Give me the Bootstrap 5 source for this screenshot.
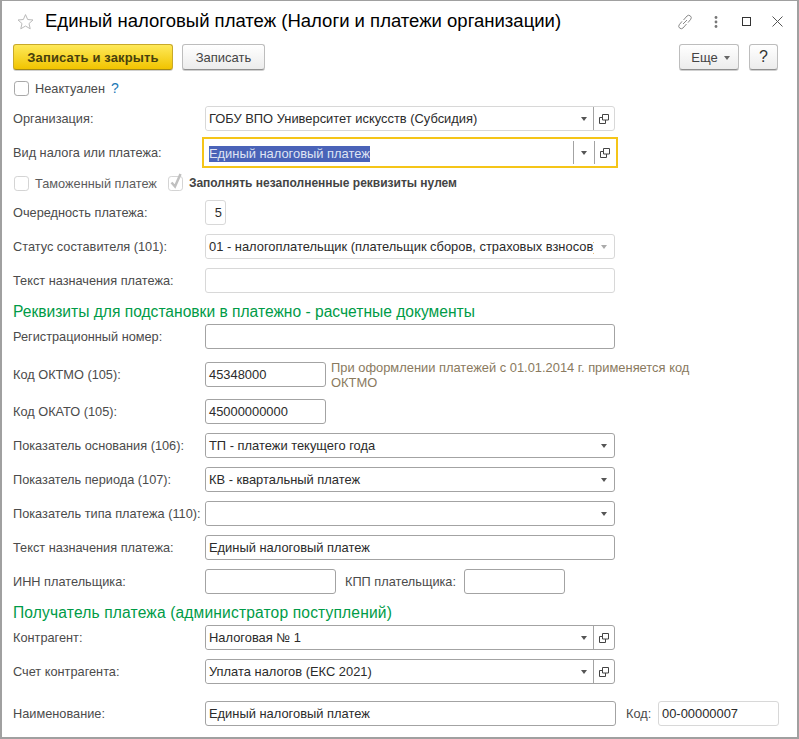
<!DOCTYPE html>
<html lang="ru">
<head>
<meta charset="utf-8">
<title>Единый налоговый платеж</title>
<link href="https://cdn.jsdelivr.net/npm/bootstrap@5.3.0/dist/css/bootstrap.min.css" rel="stylesheet">
<style>
html,body{height:739px;overflow:hidden;background:#fff}
body{font-family:"Liberation Sans",Arial,sans-serif;font-size:12.75px;color:#4b4b4b;line-height:1.2}
.win{width:799px;height:739px;border:1px solid #a0a0a0;border-width:1px 2px 2px 2px;padding:0 0 0 11px;box-sizing:border-box}
.ttl{height:43px;padding-bottom:2px}
.ttl-text{font-size:18.53px;color:#000;margin-left:11px;line-height:1;white-space:nowrap}
.star{margin-left:4px;display:block}
.tools{margin-left:auto;margin-right:4px;justify-content:flex-end}
.tbtn-wrap{width:31px;display:flex;justify-content:center}
.cmd{height:26px;padding-right:19px}
.btn.b1c{height:26px;padding:0;font-size:13px;line-height:1;color:#444;background:linear-gradient(#fff,#ececec);border:1px solid #bdbdbd;border-bottom-color:#8f8f8f;border-radius:3px;box-shadow:0 1px 0 #d0d0d0}
.btn.b1y{width:160px;font-weight:700;color:#47400c;letter-spacing:.15px;background:linear-gradient(#fee95a,#f1c400);border-color:#c8a92a;border-bottom-color:#a68a12}
.btn.b2{width:83px;margin-left:9px}
.btn.b3{width:60px;padding-left:3px}
.btn.b4{width:29px;margin-left:10px;font-size:16px;color:#333}
.caretx{display:inline-block;border:3px solid transparent;border-top:4px solid #666;border-bottom:0;margin-left:6px;vertical-align:2px}
.rowx{display:flex;align-items:center;height:25px}
.lab{width:192px;flex:none;white-space:nowrap}
.form-control.fld{height:25px;min-height:0;padding:0 3px;font-size:12.9px;line-height:23px;color:#2b2b2b;border:1px solid #a3a3a3;border-radius:3px;white-space:nowrap;overflow:hidden;box-shadow:none;background:#fff}
.form-control.soft{border-color:#d8d8d8}
.w410{width:410px;flex:none}
.input-group.cmb{width:410px;flex:none;flex-wrap:nowrap;height:25px;border:1px solid #a3a3a3;border-radius:3px;background:#fff}
.input-group.cmb.soft{border-color:#d8d8d8}
.input-group.cmb .form-control.fld{border:0;height:23px;flex:1 1 0;width:0;border-radius:3px}
.seg{width:21px;flex:none;display:flex;align-items:center;justify-content:center;border-left:1px solid #a3a3a3;height:23px}
.soft .seg.pale{border-left-color:#d8d8d8}
.seg .tri{border:3px solid transparent;border-top:4px solid #555;border-bottom:0;margin-top:1px}
.seg.pale .tri{border-top-color:#aaa}
.focusw{width:416px;flex:none;margin-left:-3px;height:31px;border:2px solid #f5c518;padding:0 1px 0 0;display:flex;align-items:center}
.focusw .form-control.fld{border:0;height:23px;flex:1 1 0;width:0;padding:0 5px;border-radius:0}
.sel{background:#4a63b8;color:#dfe4f4;display:inline-block;line-height:16px;vertical-align:middle}
.chk{width:15px!important;height:15px;margin:0!important;border:1px solid #a8a8a8;border-radius:3px;flex:none;float:none;opacity:1!important}
.chk.pale{border-color:#d4d4d4}
.chk-wrap{position:relative;width:15px;height:15px;flex:none;display:block;margin-left:1px}
.tick{position:absolute;left:1px;top:-3px}
.help{color:#1b78b5;font-size:14px;margin-left:6px}
.grn{font-size:15.6px;line-height:17px;height:17px;color:#009b47;white-space:nowrap}
.grn.wide{letter-spacing:.15px}
.hint{font-size:12.9px;line-height:15px;color:#8a7a5e;width:370px;margin-left:5px}
.greyt{color:#5c5c5c;margin-left:6px;padding-top:1px}
.boldt{font-weight:700;font-size:12px;color:#444;margin-left:6px;white-space:nowrap;padding-top:1px}
.m9{margin-top:9px}.m13{margin-top:13px}.m12{margin-top:12px}.m10{margin-top:10px}
.h16{height:16px}
.h31{height:31px;margin-top:6px}
.m7{margin-top:7px}
.m4{margin-top:4px}
.m17{margin-top:17px}
.w21{width:21px;flex:none}.w121{width:121px;flex:none}.w131{width:131px;flex:none}.w101{width:101px;flex:none}.w411{width:411px;flex:none}
.kpp{margin-left:9px;width:119px;white-space:nowrap}
.kod{margin-left:10px;width:32px}
.gap11{margin-left:11px}
.autolab{width:auto;margin-left:6px;padding-top:1px}
</style>
</head>
<body>
<div class="win">
  <div class="ttl d-flex align-items-center">
    <svg class="star" width="17" height="17" viewBox="0 0 18 17"><path d="M9 1.200l2.300 5.200 5.600.5-4.200 3.800 1.300 5.500L9 13.300l-5 2.900 1.300-5.500L1.100 6.900l5.600-.5z" fill="#fff" stroke="#b5b5b5"/></svg>
    <div class="ttl-text">Единый налоговый платеж (Налоги и платежи организации)</div>
    <div class="tools d-flex align-items-center">
      <div class="tbtn-wrap"><svg width="16" height="16" viewBox="0 0 16 16" fill="none" stroke="#8a8a8a"><path d="M6.500 6l3.500-4a2.500 2.500 0 0 1 3.800 3.200L11 8.600"/><path d="M9.500 10l-3.500 4A2.500 2.500 0 0 1 2.200 10.800L5 7.400"/><path d="M6 10l4-4"/></svg></div>
      <div class="tbtn-wrap"><svg width="4" height="12" viewBox="0 0 4 12" fill="#777"><circle cx="2" cy="1.500" r="1.400"/><circle cx="2" cy="6" r="1.400"/><circle cx="2" cy="10.500" r="1.400"/></svg></div>
      <div class="tbtn-wrap"><svg width="9" height="9" viewBox="0 0 9 9" fill="none" stroke="#333"><rect x=".5" y=".5" width="8" height="8"/></svg></div>
      <div class="tbtn-wrap"><svg width="11" height="11" viewBox="0 0 11 11" fill="none" stroke="#555"><path d="M.5.5l10 10M10.500.5l-10 10"/></svg></div>
    </div>
  </div>
  <div class="cmd d-flex align-items-center">
    <button type="button" class="btn b1c b1y">Записать и закрыть</button>
    <button type="button" class="btn b1c b2">Записать</button>
    <button type="button" class="btn b1c b3 ms-auto">Еще<span class="caretx"></span></button>
    <button type="button" class="btn b1c b4">?</button>
  </div>
  <div class="rowx h16 m10">
    <span class="chk-wrap"><input class="form-check-input chk" type="checkbox" aria-label="Неактуален"></span>
    <span class="autolab">Неактуален</span><span class="help">?</span>
  </div>
  <div class="rowx m10">
    <div class="lab">Организация:</div>
    <div class="input-group cmb soft">
      <div class="form-control fld">ГОБУ ВПО Университет искусств (Субсидия)</div>
      <div class="seg"><span class="tri"></span></div>
      <div class="seg"><svg width="10" height="10" viewBox="0 0 10 10" fill="none" stroke="#444"><path d="M3.500.5h6v5.500h-6z"/><path d="M3.500 3.500H.5v6h6V6"/></svg></div>
    </div>
  </div>
  <div class="rowx h31">
    <div class="lab">Вид налога или платежа:</div>
    <div class="focusw">
      <div class="form-control fld"><span class="sel">Единый налоговый платеж</span></div>
      <div class="seg"><span class="tri"></span></div>
      <div class="seg"><svg width="10" height="10" viewBox="0 0 10 10" fill="none" stroke="#444"><path d="M3.500.5h6v5.500h-6z"/><path d="M3.500 3.500H.5v6h6V6"/></svg></div>
    </div>
  </div>
  <div class="rowx h16 m7">
    <span class="chk-wrap"><input class="form-check-input chk pale" type="checkbox" disabled aria-label="Таможенный платеж"></span>
    <span class="greyt">Таможенный платеж</span>
    <span class="chk-wrap gap11"><input class="form-check-input chk pale" type="checkbox" disabled aria-label="Заполнять"><svg class="tick" width="13" height="16" viewBox="0 0 13 16" fill="none" stroke="#c0c0c0" stroke-width="2.500"><path d="M2.500 9.500l3.500 4L11.500 1"/></svg></span>
    <span class="boldt">Заполнять незаполненные реквизиты нулем</span>
  </div>
  <div class="rowx m9">
    <div class="lab">Очередность платежа:</div>
    <div class="form-control fld soft text-end w21">5</div>
  </div>
  <div class="rowx m9">
    <div class="lab">Статус составителя (101):</div>
    <div class="input-group cmb soft">
      <div class="form-control fld">01 - налогоплательщик (плательщик сборов, страховых взносов)</div>
      <div class="seg pale"><span class="tri"></span></div>
    </div>
  </div>
  <div class="rowx m9">
    <div class="lab">Текст назначения платежа:</div>
    <div class="form-control fld soft w410"></div>
  </div>
  <div class="grn m10">Реквизиты для подстановки в платежно - расчетные документы</div>
  <div class="rowx m4">
    <div class="lab">Регистрационный номер:</div>
    <div class="form-control fld w410"></div>
  </div>
  <div class="rowx m13">
    <div class="lab">Код ОКТМО (105):</div>
    <div class="form-control fld w121">45348000</div>
    <div class="hint">При оформлении платежей с 01.01.2014 г. применяется код ОКТМО</div>
  </div>
  <div class="rowx m12">
    <div class="lab">Код ОКАТО (105):</div>
    <div class="form-control fld w121">45000000000</div>
  </div>
  <div class="rowx m9">
    <div class="lab">Показатель основания (106):</div>
    <div class="input-group cmb"><div class="form-control fld">ТП - платежи текущего года</div><div class="seg"><span class="tri"></span></div></div>
  </div>
  <div class="rowx m9">
    <div class="lab">Показатель периода (107):</div>
    <div class="input-group cmb"><div class="form-control fld">КВ - квартальный платеж</div><div class="seg"><span class="tri"></span></div></div>
  </div>
  <div class="rowx m9">
    <div class="lab">Показатель типа платежа (110):</div>
    <div class="input-group cmb"><div class="form-control fld"></div><div class="seg"><span class="tri"></span></div></div>
  </div>
  <div class="rowx m9">
    <div class="lab">Текст назначения платежа:</div>
    <div class="form-control fld w410">Единый налоговый платеж</div>
  </div>
  <div class="rowx m9">
    <div class="lab">ИНН плательщика:</div>
    <div class="form-control fld w131"></div>
    <div class="kpp">КПП плательщика:</div>
    <div class="form-control fld w101"></div>
  </div>
  <div class="grn wide m10">Получатель платежа (администратор поступлений)</div>
  <div class="rowx m4">
    <div class="lab">Контрагент:</div>
    <div class="input-group cmb">
      <div class="form-control fld">Налоговая № 1</div>
      <div class="seg"><span class="tri"></span></div>
      <div class="seg"><svg width="10" height="10" viewBox="0 0 10 10" fill="none" stroke="#444"><path d="M3.500.5h6v5.500h-6z"/><path d="M3.500 3.500H.5v6h6V6"/></svg></div>
    </div>
  </div>
  <div class="rowx m9">
    <div class="lab">Счет контрагента:</div>
    <div class="input-group cmb">
      <div class="form-control fld">Уплата налогов (ЕКС 2021)</div>
      <div class="seg"><span class="tri"></span></div>
      <div class="seg"><svg width="10" height="10" viewBox="0 0 10 10" fill="none" stroke="#444"><path d="M3.500.5h6v5.500h-6z"/><path d="M3.500 3.500H.5v6h6V6"/></svg></div>
    </div>
  </div>
  <div class="rowx m17">
    <div class="lab">Наименование:</div>
    <div class="form-control fld w411">Единый налоговый платеж</div>
    <div class="kod">Код:</div>
    <div class="form-control fld soft w121">00-00000007</div>
  </div>
</div>
<script src="https://cdn.jsdelivr.net/npm/bootstrap@5.3.0/dist/js/bootstrap.bundle.min.js"></script>
</body>
</html>
